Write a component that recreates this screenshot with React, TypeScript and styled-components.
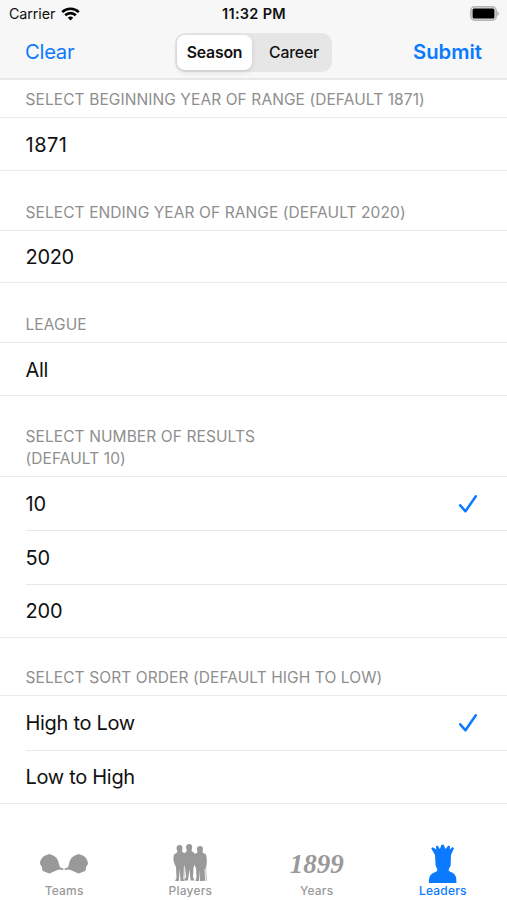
import React from "react";
import styled, { createGlobalStyle } from "styled-components";

const GlobalStyle = createGlobalStyle`
  * { box-sizing: border-box; }
  body { margin: 0; background: #fff; font-family: Inter, "Liberation Sans", sans-serif; color: #111; }
  button { font: inherit; border: 0; padding: 0; background: none; }
`;

const Screen = styled.div`
  width: 507px;
  height: 900px;
  display: flex;
  flex-direction: column;
  overflow: hidden;
  background: #fff;
`;

const TopBar = styled.header`
  height: 80px;
  flex: none;
  background: #f7f7f7;
  border-bottom: 2px solid #e8e8e8;
`;

const StatusBar = styled.div`
  height: 27px;
  display: grid;
  grid-template-columns: 1fr auto 1fr;
  align-items: center;
  padding: 0 8px 0 9px;
`;

const Carrier = styled.span`
  display: flex;
  align-items: center;
  gap: 6px;
  font-size: 14.3px;
  letter-spacing: -0.1px;
`;

const Clock = styled.span`
  font-size: 14.5px;
  font-weight: 600;
  letter-spacing: 0.3px;
`;

const BatterySlot = styled.span`
  display: flex;
  justify-content: flex-end;
`;

const NavBar = styled.nav`
  height: 50px;
  display: grid;
  grid-template-columns: 1fr auto 1fr;
  align-items: center;
  padding: 0 25px;
`;

const NavButton = styled.button<{ $strong?: boolean }>`
  justify-self: ${(p) => (p.$strong ? "end" : "start")};
  font-size: 20.3px;
  line-height: 24px;
  font-weight: ${(p) => (p.$strong ? 600 : 400)};
  letter-spacing: ${(p) => (p.$strong ? "0" : "-0.3px")};
  color: #0b7aff;
`;

const Segmented = styled.div`
  display: grid;
  grid-template-columns: 75px 78px;
  width: 157px;
  height: 39px;
  padding: 2px;
  border-radius: 10px;
  background: #e6e6e7;
`;

const Segment = styled.button<{ $active?: boolean }>`
  padding-left: ${(p) => (p.$active ? "0" : "6px")};
  border-radius: 8px;
  font-size: 15.8px;
  font-weight: ${(p) => (p.$active ? 600 : 500)};
  letter-spacing: -0.2px;
  color: #111;
  background: ${(p) => (p.$active ? "#fff" : "transparent")};
  box-shadow: ${(p) => (p.$active ? "0 2px 5px rgba(0,0,0,.12)" : "none")};
`;

const Form = styled.main`
  flex: 1;
`;

const SectionTitle = styled.h2<{ $height: number }>`
  display: flex;
  align-items: flex-end;
  height: ${(p) => p.$height}px;
  margin: 0;
  padding: 0 25px 6px 25.5px;
  border-bottom: 1px solid #ebebeb;
  font-size: 15.5px;
  line-height: 22px;
  font-weight: 400;
  letter-spacing: 0.09px;
  white-space: pre-line;
  color: #8e8e8e;
`;

const Options = styled.div`
  border-bottom: 1px solid #ebebeb;
`;

const Option = styled.div<{ $height: number; $tracking?: number }>`
  display: flex;
  height: ${(p) => p.$height}px;
  margin-left: 25.5px;
  padding: 1px 29px 0 0;
  align-items: center;
  justify-content: space-between;
  font-size: 20px;
  letter-spacing: ${(p) => p.$tracking ?? -0.3}px;
  & + & { border-top: 1px solid #e8e8e8; }
`;

const TabBar = styled.footer`
  height: 63px;
  display: grid;
  grid-template-columns: repeat(4, 1fr);
  padding: 0 1px;
`;

const Tab = styled.button<{ $active?: boolean }>`
  display: flex;
  flex-direction: column;
  align-items: center;
  color: ${(p) => (p.$active ? "#0b7aff" : "#999")};
`;

const TabIcon = styled.span`
  height: 47px;
  display: flex;
  align-items: flex-end;
  svg { display: block; }
`;

const TabLabel = styled.span`
  font-size: 12px;
  line-height: 14px;
  font-weight: 500;
  letter-spacing: 0.2px;
`;

const YearMark = styled.span`
  font: italic 700 27px/39px "Liberation Serif", serif;
`;

const Wifi = () => (
  <svg width="19" height="14" viewBox="0 0 19 14" fill="none" stroke="#000" strokeWidth="2.6">
    <path d="M1.2 5.1a12 12 0 0 1 16.6 0" />
    <path d="M4.2 8.3a7.6 7.6 0 0 1 10.6 0" />
    <path d="M6.8 10.7a4 4 0 0 1 5.4 0L9.5 13.6z" fill="#000" stroke="none" />
  </svg>
);

const Battery = () => (
  <svg width="29" height="15" viewBox="0 0 29 15">
    <rect x="0.8" y="0.8" width="25.4" height="13.4" rx="4" fill="#ddd" stroke="#b5b5b5" strokeWidth="1.6" />
    <rect x="2.6" y="2.6" width="21.8" height="9.8" rx="1.5" fill="#000" />
    <path d="M27.2 5q1.8 1 1.8 2.5T27.2 10z" fill="#b5b5b5" />
  </svg>
);

const Check = () => (
  <svg width="20" height="20" viewBox="0 0 20 20" fill="none" stroke="#0b7aff" strokeWidth="2.5" strokeLinecap="round" strokeLinejoin="round">
    <path d="M2.2 11.3 7.5 17.3 17.8 2.3" />
  </svg>
);

const Caps = () => (
  <svg width="50" height="31" viewBox="0 0 50 31" fill="currentColor">
    <path d="M1 11C1 6 4.5 2.4 9 1.8L10.5.8 12 1.8C16.5 2.8 19.5 6.5 20 11.5L21 14.3 24.6 15.8 24 17.2 20.5 16.4C16.5 17 14.5 18.8 10.8 20.5 8 20 6 18.600 3.500 18L3 14Z" />
    <path d="M49 11C49 6 45.5 2.4 41 1.8L39.5.8 38 1.8C33.5 2.8 30.5 6.500 30 11.500L29 14.300 25.400 15.800 26 17.200 29.500 16.400C33.500 17 35.500 18.800 39.200 20.500 42 20 44 18.600 46.500 18L47 14Z" />
  </svg>
);

const PlayersArt = () => (
  <svg width="36" height="40" viewBox="0 0 36 40" fill="currentColor">
    <path d="M4.5 4.5Q4.5 1 7.5 1t3 3L10 7.5l2.5 2Q15 17 11.5 23.5L11 34l1.5 3H8.500L7.800 25 6.800 37H3l1.500-3-.5-11Q0 16 2 10.500L5.500 8Z" />
    <path d="M14 3.500Q14 0 17.200 0t3 3.500L19.500 7l3 2q2.500 8-1 14.500L21 33l1.500 3.500h-4L17.500 25 16 36.500h-4.500L14 33l-1-10Q10 15 12 9.500L15 7Z" />
    <path d="M25 5Q25 2 28 2t3 3L30.500 8.500l3.500 2q2 8-.5 14L32.500 25l.8 12-1.600-.5-.2.500H28L27.500 26 27 37h-3.500l1-4L24 24Q20 18 22.500 10L25.500 8.500Z" />
    <path d="m12 12-1.500 24M33.500 20l1 17M12 13v21" fill="none" stroke="currentColor" strokeWidth=".7" />
  </svg>
);

const Crown = () => (
  <svg width="29" height="40" viewBox="0 0 29 40" fill="currentColor">
    <path d="M3.200 4.200 4.800 3.200 8.200 5.500 8 2 9.800 1.800 11.800 5 13.500.8h2.200L17.500 5 20.300 1.600 22 2.300 21.800 5.500 24.500 3 26 4.200 23 11 22.600 22 20.800 25V27L25 29Q28.700 31 28.500 39H.9Q.6 31.500 4.400 29.500L9.200 27V25L7.600 21.500 7 11Z" />
  </svg>
);

const sections = [
  { title: "SELECT BEGINNING YEAR OF RANGE (DEFAULT 1871)", height: 38, options: ["1871"], rowHeight: 52, tracking: 0.5 },
  { title: "SELECT ENDING YEAR OF RANGE (DEFAULT 2020)", height: 60, options: ["2020"], rowHeight: 51 },
  { title: "LEAGUE", height: 60, options: ["All"], rowHeight: 52 },
  { title: "SELECT NUMBER OF RESULTS\n(DEFAULT 10)", height: 81, options: ["10", "50", "200"], rowHeight: 53.4, selected: "10", tracking: -0.1 },
  { title: "SELECT SORT ORDER (DEFAULT HIGH TO LOW)", height: 58, options: ["High to Low", "Low to High"], rowHeight: 53.5, selected: "High to Low" },
];

export default function App() {
  return (
    <Screen>
      <GlobalStyle />
      <TopBar>
        <StatusBar>
          <Carrier>Carrier <Wifi /></Carrier>
          <Clock>11:32 PM</Clock>
          <BatterySlot><Battery /></BatterySlot>
        </StatusBar>
        <NavBar>
          <NavButton>Clear</NavButton>
          <Segmented>
            <Segment $active>Season</Segment>
            <Segment>Career</Segment>
          </Segmented>
          <NavButton $strong>Submit</NavButton>
        </NavBar>
      </TopBar>
      <Form>
        {sections.map((s) => (
          <section key={s.title}>
            <SectionTitle $height={s.height}>{s.title}</SectionTitle>
            <Options>
              {s.options.map((o) => (
                <Option key={o} $height={s.rowHeight} $tracking={s.tracking}>
                  {o}
                  {s.selected === o && <Check />}
                </Option>
              ))}
            </Options>
          </section>
        ))}
      </Form>
      <TabBar>
        <Tab><TabIcon><Caps /></TabIcon><TabLabel>Teams</TabLabel></Tab>
        <Tab><TabIcon><PlayersArt /></TabIcon><TabLabel>Players</TabLabel></Tab>
        <Tab><TabIcon><YearMark>1899</YearMark></TabIcon><TabLabel>Years</TabLabel></Tab>
        <Tab $active><TabIcon><Crown /></TabIcon><TabLabel>Leaders</TabLabel></Tab>
      </TabBar>
    </Screen>
  );
}
